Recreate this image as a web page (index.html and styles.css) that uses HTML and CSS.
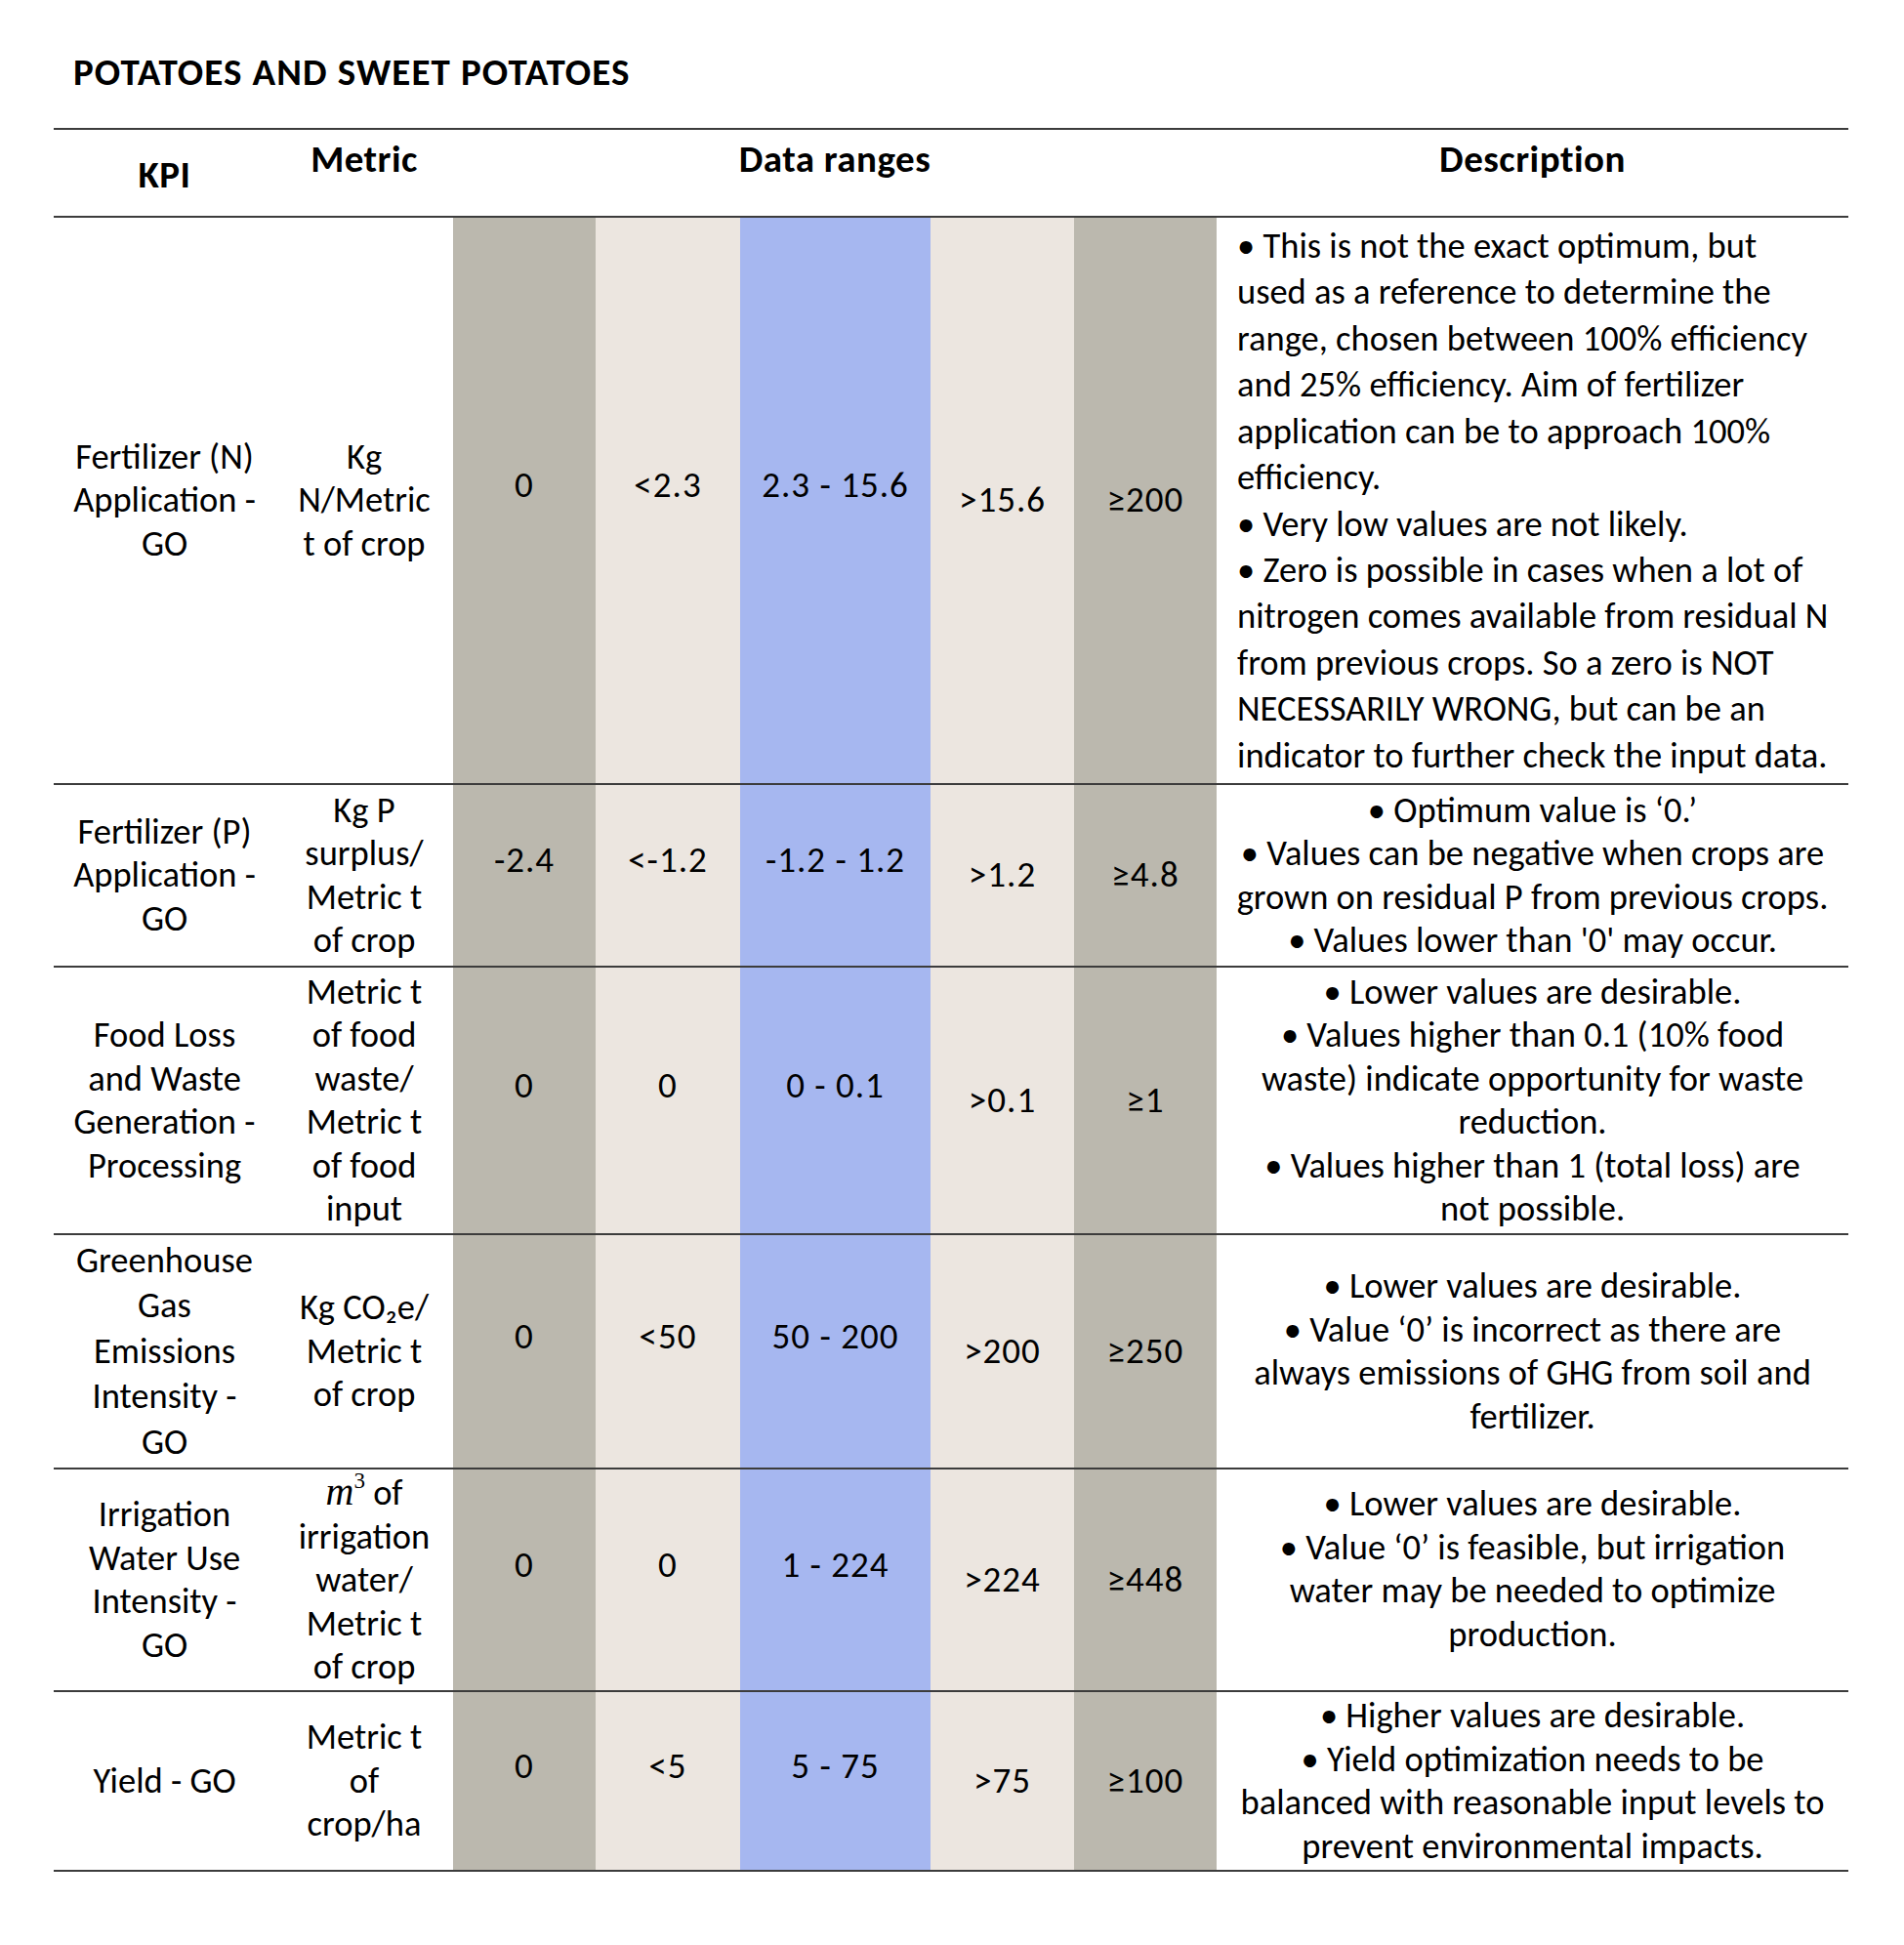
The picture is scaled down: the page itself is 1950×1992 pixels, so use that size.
FILE: index.html
```html
<!DOCTYPE html>
<html lang="en">
<head>
<meta charset="utf-8">
<title>Potatoes and Sweet Potatoes</title>
<link rel="stylesheet" href="styles.css">
</head>
<body>
<h1 class="title">POTATOES AND SWEET POTATOES</h1>
<table class="kpi-table">
  <colgroup>
    <col class="c-kpi"><col class="c-metric"><col class="c-r1"><col class="c-r2"><col class="c-r3"><col class="c-r4"><col class="c-r5"><col class="c-desc">
  </colgroup>
  <thead>
    <tr class="head-row">
      <th class="h-kpi">KPI</th>
      <th class="h-raised">Metric</th>
      <th class="h-raised" colspan="5">Data ranges</th>
      <th class="h-raised">Description</th>
    </tr>
  </thead>
  <tbody>
    <tr class="row-1">
      <td class="kpi">Fertilizer (N)<br>Application -<br>GO</td>
      <td class="metric">Kg<br>N/Metric<br>t of crop</td>
      <td class="v gray up">0</td>
      <td class="v beige up">&lt;2.3</td>
      <td class="v blue up">2.3 - 15.6</td>
      <td class="v beige">&gt;15.6</td>
      <td class="v gray">≥200</td>
      <td class="desc desc-left">• This is not the exact optimum, but<br>used as a reference to determine the<br>range, chosen between 100% efficiency<br>and 25% efficiency. Aim of fertilizer<br>application can be to approach 100%<br>efficiency.<br>• Very low values are not likely.<br>• Zero is possible in cases when a lot of<br>nitrogen comes available from residual N<br>from previous crops. So a zero is NOT<br>NECESSARILY WRONG, but can be an<br>indicator to further check the input data.</td>
    </tr>
    <tr class="row-2">
      <td class="kpi">Fertilizer (P)<br>Application -<br>GO</td>
      <td class="metric">Kg P<br>surplus/<br>Metric t<br>of crop</td>
      <td class="v gray up">-2.4</td>
      <td class="v beige up">&lt;-1.2</td>
      <td class="v blue up">-1.2 - 1.2</td>
      <td class="v beige">&gt;1.2</td>
      <td class="v gray">≥4.8</td>
      <td class="desc">• Optimum value is ‘0.’<br>• Values can be negative when crops are<br>grown on residual P from previous crops.<br>• Values lower than '0' may occur.</td>
    </tr>
    <tr class="row-3">
      <td class="kpi">Food Loss<br>and Waste<br>Generation -<br>Processing</td>
      <td class="metric">Metric t<br>of food<br>waste/<br>Metric t<br>of food<br>input</td>
      <td class="v gray up">0</td>
      <td class="v beige up">0</td>
      <td class="v blue up">0 - 0.1</td>
      <td class="v beige">&gt;0.1</td>
      <td class="v gray">≥1</td>
      <td class="desc">• Lower values are desirable.<br>• Values higher than 0.1 (10% food<br>waste) indicate opportunity for waste<br>reduction.<br>• Values higher than 1 (total loss) are<br>not possible.</td>
    </tr>
    <tr class="row-4">
      <td class="kpi kpi-tall">Greenhouse<br>Gas<br>Emissions<br>Intensity -<br>GO</td>
      <td class="metric">Kg CO₂e/<br>Metric t<br>of crop</td>
      <td class="v gray up">0</td>
      <td class="v beige up">&lt;50</td>
      <td class="v blue up">50 - 200</td>
      <td class="v beige">&gt;200</td>
      <td class="v gray">≥250</td>
      <td class="desc">• Lower values are desirable.<br>• Value ‘0’ is incorrect as there are<br>always emissions of GHG from soil and<br>fertilizer.</td>
    </tr>
    <tr class="row-5">
      <td class="kpi">Irrigation<br>Water Use<br>Intensity -<br>GO</td>
      <td class="metric"><span class="math">m</span><sup class="sup">3</sup> of<br>irrigation<br>water/<br>Metric t<br>of crop</td>
      <td class="v gray up">0</td>
      <td class="v beige up">0</td>
      <td class="v blue up">1 - 224</td>
      <td class="v beige">&gt;224</td>
      <td class="v gray">≥448</td>
      <td class="desc desc-high">• Lower values are desirable.<br>• Value ‘0’ is feasible, but irrigation<br>water may be needed to optimize<br>production.</td>
    </tr>
    <tr class="row-6">
      <td class="kpi">Yield - GO</td>
      <td class="metric">Metric t<br>of<br>crop/ha</td>
      <td class="v gray up">0</td>
      <td class="v beige up">&lt;5</td>
      <td class="v blue up">5 - 75</td>
      <td class="v beige">&gt;75</td>
      <td class="v gray">≥100</td>
      <td class="desc">• Higher values are desirable.<br>• Yield optimization needs to be<br>balanced with reasonable input levels to<br>prevent environmental impacts.</td>
    </tr>
  </tbody>
</table>
</body>
</html>
```
FILE: styles.css
```css
html, body {
  margin: 0;
  padding: 0;
  background: #ffffff;
}

body {
  font-family: "Carlito", "Lato", "Liberation Sans", sans-serif;
  color: #000000;
}

.title {
  margin: 0;
  padding: 51px 0 0 75px;
  font-size: 39px;
  line-height: 46px;
  font-weight: 700;
  letter-spacing: 1.1px;
}

.kpi-table {
  margin: 34px 0 0 55px;
  width: 1838px;
  border-collapse: collapse;
  table-layout: fixed;
}

.c-kpi { width: 227px; }
.c-metric { width: 182px; }
.c-r1 { width: 146px; }
.c-r2 { width: 148px; }
.c-r3 { width: 195px; }
.c-r4 { width: 147px; }
.c-r5 { width: 146px; }
.c-desc { width: 647px; }

.kpi-table tr {
  border-bottom: 2px solid #3c3c3c;
}

.kpi-table .head-row {
  border-top: 2px solid #3c3c3c;
  height: 90px;
}

.kpi-table th,
.kpi-table td {
  padding: 0;
  text-align: center;
  vertical-align: middle;
  white-space: nowrap;
  line-height: 44.5px;
  font-size: 36.5px;
}

.kpi-table th {
  font-weight: 700;
  font-size: 39px;
  letter-spacing: 0.5px;
}

.kpi-table .h-kpi {
  padding-top: 4px;
}

.kpi-table .h-raised {
  padding-bottom: 28px;
}

.row-1 { height: 581px; }
.row-2 { height: 187px; }
.row-3 { height: 274px; }
.row-4 { height: 240px; }
.row-5 { height: 228px; }
.row-6 { height: 184px; }

.kpi-table .kpi-tall {
  line-height: 46.5px;
}

.gray { background: #bbb8ae; }
.beige { background: #ece6e0; }
.blue { background: #a6b7f0; }

.kpi-table .v {
  font-size: 37px;
  letter-spacing: 1px;
}

.kpi-table .v.up {
  padding-bottom: 30px;
}

.kpi-table .desc-left {
  text-align: left;
  padding-left: 21px;
  line-height: 47.4px;
}

.kpi-table .desc-high {
  padding-bottom: 22px;
}

.math {
  font-family: "Liberation Serif", "DejaVu Serif", serif;
  font-style: italic;
  font-size: 40px;
}

.sup {
  font-size: 23px;
  line-height: 0;
  vertical-align: 17px;
  font-family: "Liberation Serif", "DejaVu Serif", serif;
}
```
